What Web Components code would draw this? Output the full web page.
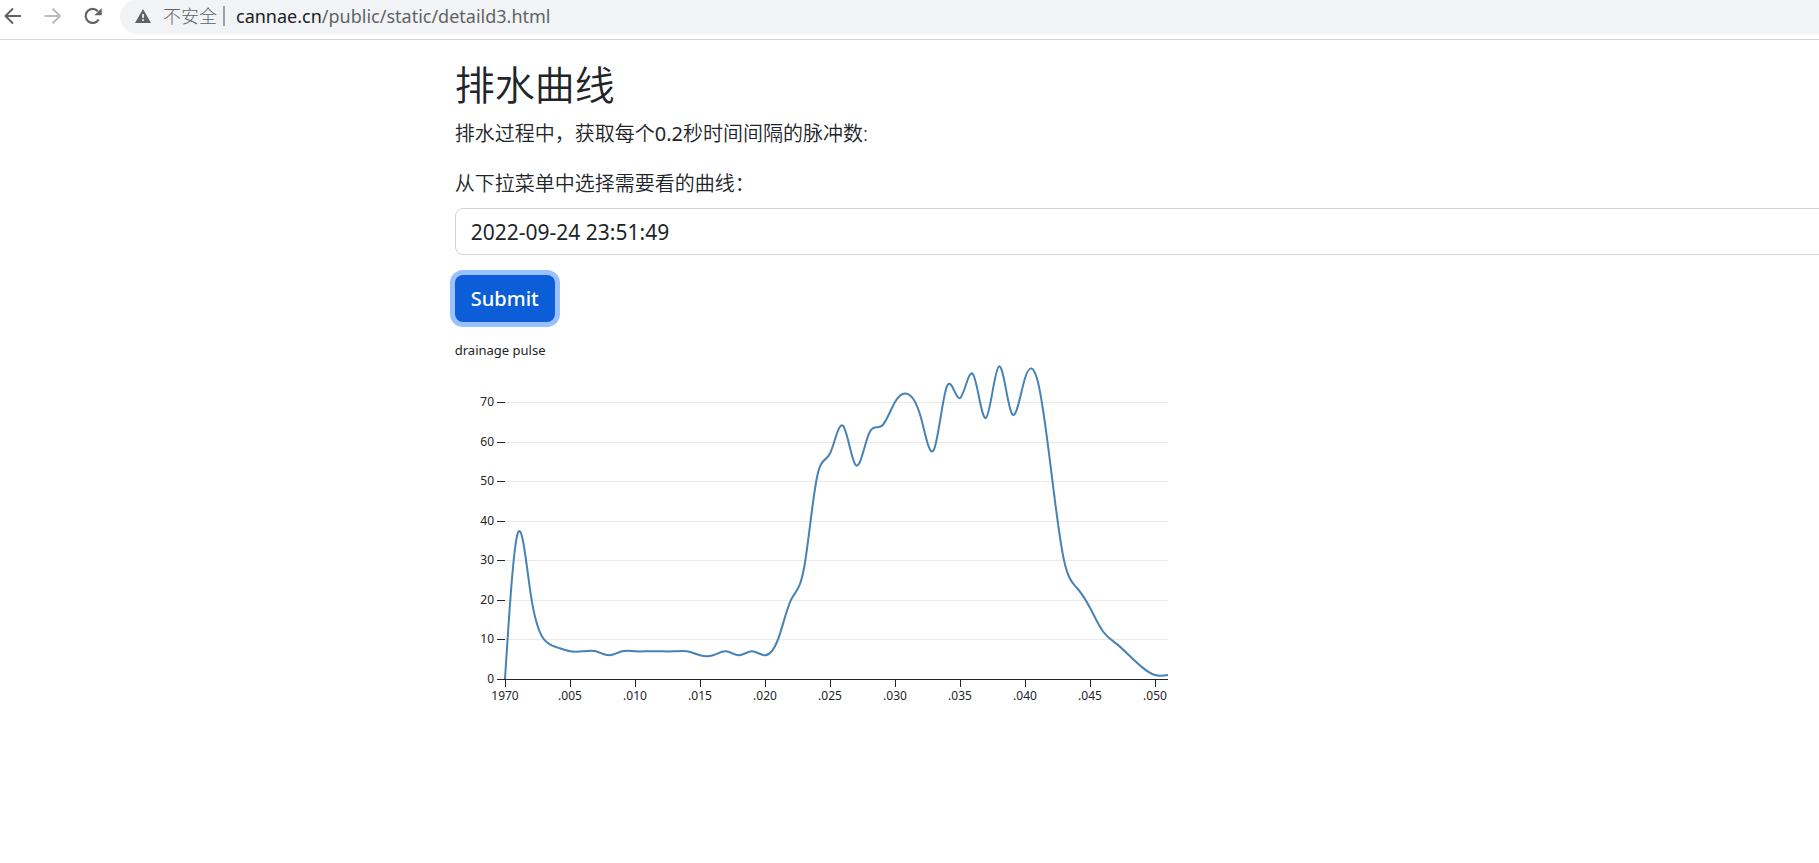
<!DOCTYPE html>
<html lang="zh-CN">
<head>
<meta charset="utf-8">
<meta name="viewport" content="width=device-width, initial-scale=1">
<title>排水曲线</title>
<style>
  body {
    margin: 0;
    background: #fff;
    color: #212529;
    font-family: "Noto Sans", "Noto Sans CJK SC", sans-serif;
  }
  .number { font-weight: 400; }
</style>
</head>
<body>
<browser-bar notice="不安全"><b slot="host">cannae.cn</b><span slot="path">/public/static/detaild3.html</span></browser-bar>
<drainage-page>
  <h1 slot="title">排水曲线</h1>
  <p slot="intro">排水过程中，获取每个<span class="number">0.2</span>秒时间间隔的脉冲数:</p>
  <curve-form></curve-form>
  <pulse-chart
    caption="drainage pulse"
    values="0 37 21 10 8 7 7 7 6 7 7 7 7 7 7 6 6 7 6 7 6 10 20 28 51 57 64 54 62 64 70 72 66 58 74 71 77 66 79 67 76 75 53 30 23 18 12 9 6 3 1 1"></pulse-chart>
</drainage-page>

<script>
class BrowserBar extends HTMLElement {
  constructor() {
    super();
    this.attachShadow({ mode: "open" }).innerHTML = `
      <style>
        :host { display: block; border-bottom: 1px solid #d5d7da; }
        nav { display: flex; height: 39px; align-items: flex-start; }
        button {
          flex: none; width: 40px; height: 32px; padding: 0;
          border: 0; background: none; color: #5f6368;
        }
        button:disabled { color: #babcbe; }
        svg { display: block; flex: none; }
        .address {
          flex: 1; display: flex; align-items: center; height: 34px;
          box-sizing: border-box; padding: 0 0 2px 15px;
          background: #f1f3f4; border-radius: 17px 0 0 17px;
          color: #5f6368; font-size: 18px; line-height: 24px;
          white-space: nowrap;
        }
        .notice { margin-left: 12px; font-weight: 300; }
        .rule { width: 2px; height: 20px; margin: 0 11px 0 6px; background: #9aa0a6; }
        a { color: inherit; text-decoration: none; }
        ::slotted(b) { color: #202124; font-weight: 400; }
      </style>
      <nav aria-label="Browser">
        <button aria-label="Back"><svg width="40" height="32" viewBox="0 0 40 32" fill="none" stroke="currentColor" stroke-width="2"><path d="M21 16H6M13 8.500 5.500 16l7.500 7.500"/></svg></button>
        <button aria-label="Forward" disabled><svg width="40" height="32" viewBox="0 0 40 32" fill="none" stroke="currentColor" stroke-width="2"><path d="M4.500 16h15M12.500 8.500l7.500 7.500-7.500 7.500"/></svg></button>
        <button aria-label="Reload"><svg width="40" height="32" viewBox="0 0 40 32" fill="none"><path d="M18.700 19.500a7 7 0 1 1-.9-8.300" stroke="currentColor" stroke-width="2.200"/><path d="M21.700 8v7.300h-7.300z" fill="currentColor"/></svg></button>
        <div class="address">
          <svg width="16" height="14" viewBox="0 0 16 14"><path d="M8 0l8 14H0z" fill="#5f6368"/><path d="M7.200 5h1.700v4H7.200zM7.200 10.300h1.700V12H7.200z" fill="#f1f3f4"/></svg>
          <span class="notice">${this.getAttribute("notice") || ""}</span>
          <span class="rule"></span>
          <a href="#"><slot name="host"></slot><slot name="path"></slot></a>
        </div>
      </nav>`;
  }
}

class DrainagePage extends HTMLElement {
  constructor() {
    super();
    this.attachShadow({ mode: "open" }).innerHTML = `
      <style>
        :host { display: block; overflow-x: clip; padding-top: 20px; }
        main { display: block; width: 100%; margin-left: 25%; }
        ::slotted(h1) { margin: 0 0 9px; font-size: 40px; font-weight: 350; line-height: 50px; }
        ::slotted(p) { margin: 0 0 20px; font-size: 20px; font-weight: 350; line-height: 30px; }
      </style>
      <main>
        <slot name="title"></slot>
        <slot name="intro"></slot>
        <slot></slot>
      </main>`;
  }
}

class CurveForm extends HTMLElement {
  constructor() {
    super();
    this.attachShadow({ mode: "open" }).innerHTML = `
      <style>
        :host { display: block; }
        form { display: flex; flex-direction: column; align-items: flex-start; }
        label { margin-bottom: 9px; font-size: 20px; font-weight: 350; line-height: 30px; }
        select {
          appearance: none; width: 100%; height: 47px; box-sizing: border-box;
          margin: 0 0 20px; padding: 0 15px; border: 1px solid #ced4da;
          border-radius: 8px; background: #fff; color: #212529;
          font-family: inherit; font-size: 21px; line-height: 30px;
        }
        button {
          height: 47px; margin: 0; padding: 0 16px; border: 0; border-radius: 8px;
          background: #0b5ed7; color: #fff; box-shadow: 0 0 0 5px #98c1fe;
          font-family: inherit; font-size: 20px; font-weight: 500; line-height: 30px;
        }
      </style>
      <form>
        <label for="curve">从下拉菜单中选择需要看的曲线：</label>
        <select id="curve"><option>2022-09-24 23:51:49</option></select>
        <button type="button">Submit</button>
      </form>`;
  }
}

class PulseChart extends HTMLElement {
  static STEP = 13;
  static BASE = 320;
  static LEFT = 50;
  static UNIT = 277 / 70;

  constructor() {
    super();
    this.attachShadow({ mode: "open" });
  }

  connectedCallback() {
    const { STEP, BASE, LEFT, UNIT } = PulseChart;
    const values = this.getAttribute("values").split(" ").map(Number);
    const right = LEFT + STEP * (values.length - 1);
    const points = values.map((v, i) => [LEFT + STEP * i, BASE - v * UNIT]);
    let marks = "";
    for (let v = 0; v <= 70; v += 10) {
      const y = Math.round(BASE - v * UNIT);
      if (v) marks += `<path class="grid" d="M${LEFT} ${y}H${right}"/>`;
      marks += `<path class="tick" d="M${LEFT - 8} ${y}h8"/><text class="value" x="${LEFT - 11}" y="${y + 4}">${v}</text>`;
    }
    for (let i = 0; i < values.length; i += 5) {
      const x = LEFT + STEP * i;
      const name = i ? "." + String(i).padStart(3, "0") : "1970";
      marks += `<path class="tick" d="M${x} ${BASE}v8"/><text class="time" x="${x}" y="${BASE + 21}">${name}</text>`;
    }
    this.shadowRoot.innerHTML = `
      <style>
        :host { display: block; margin-top: 19px; }
        figure { margin: 0; }
        figcaption { font-size: 13px; line-height: 18px; }
        svg { display: block; overflow: visible; }
        path { fill: none; }
        .grid { stroke: #e9e9e9; stroke-width: 1; shape-rendering: crispEdges; }
        .tick, .axis { stroke: #212529; stroke-width: 1; shape-rendering: crispEdges; }
        .line { stroke: steelblue; stroke-width: 2; stroke-linejoin: round; }
        text { fill: #212529; font-size: 12px; }
        .value { text-anchor: end; }
        .time { text-anchor: middle; }
      </style>
      <figure>
        <figcaption>${this.getAttribute("caption")}</figcaption>
        <svg width="720" height="350" viewBox="0 0 720 350" role="img" aria-label="${this.getAttribute("caption")}">
          ${marks}
          <path class="axis" d="M${LEFT} ${BASE}H${right}"/>
          <path class="line" d="${PulseChart.curve(points)}"/>
        </svg>
      </figure>`;
  }

  // Natural cubic spline, written as cubic Bézier segments.
  static curve(p) {
    const controls = (x) => {
      const n = x.length - 1, a = [0], b = [2], r = [x[0] + 2 * x[1]], first = [], second = [];
      for (let i = 1; i < n - 1; i++) { a[i] = 1; b[i] = 4; r[i] = 4 * x[i] + 2 * x[i + 1]; }
      a[n - 1] = 2; b[n - 1] = 7; r[n - 1] = 8 * x[n - 1] + x[n];
      for (let i = 1; i < n; i++) {
        const m = a[i] / b[i - 1];
        b[i] -= m;
        r[i] -= m * r[i - 1];
      }
      first[n - 1] = r[n - 1] / b[n - 1];
      for (let i = n - 2; i >= 0; i--) first[i] = (r[i] - first[i + 1]) / b[i];
      for (let i = 0; i < n - 1; i++) second[i] = 2 * x[i + 1] - first[i + 1];
      second[n - 1] = (x[n] + first[n - 1]) / 2;
      return [first, second];
    };
    const [x1, x2] = controls(p.map((q) => q[0]));
    const [y1, y2] = controls(p.map((q) => q[1]));
    return `M${p[0]}` + p.slice(1).map((q, i) => `C${x1[i]},${y1[i]} ${x2[i]},${y2[i]} ${q}`).join("");
  }
}

customElements.define("browser-bar", BrowserBar);
customElements.define("drainage-page", DrainagePage);
customElements.define("curve-form", CurveForm);
customElements.define("pulse-chart", PulseChart);
</script>
</body>
</html>
